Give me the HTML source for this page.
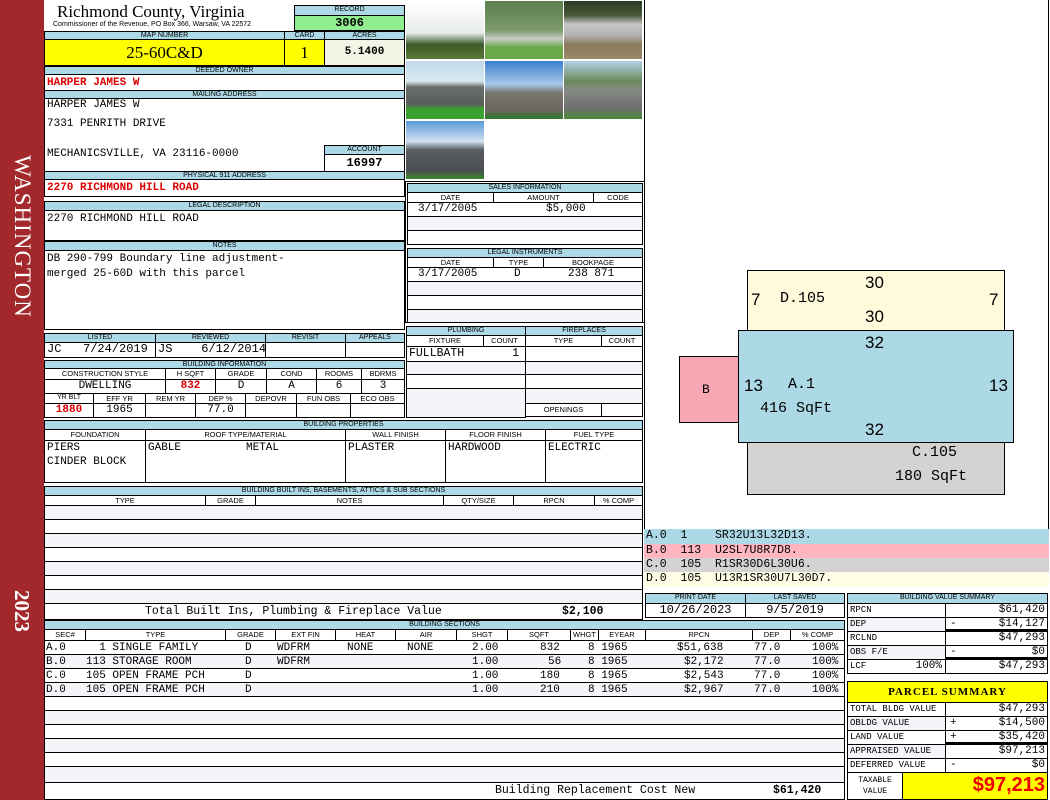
<!DOCTYPE html>
<html><head><meta charset="utf-8">
<style>
*{box-sizing:border-box;margin:0;padding:0}
body{width:1050px;height:800px;position:relative;background:#fff;overflow:hidden;font-family:"Liberation Mono",monospace;font-size:11px;color:#000}
div{position:absolute}
.h{background:#add8e6;border:1px solid #000;font:7px "Liberation Sans",sans-serif;text-align:center;line-height:8px;white-space:nowrap;overflow:hidden}
.s{background:#fff;border:1px solid #000;font:7.5px "Liberation Sans",sans-serif;text-align:center;line-height:9px;white-space:nowrap;overflow:hidden}
.c{border:1px solid #000;background:#fff;white-space:nowrap;overflow:hidden;line-height:13px;padding:0 2px}
.g{background:#f3f5f9}
.r{text-align:right}.ce{text-align:center}
.red{color:#d00;font-weight:bold}
.b{font-weight:bold}
.ph{border:1px solid #fff}
.sg{position:absolute;left:4px}
</style></head><body>
<!-- sidebar -->
<div style="left:0;top:0;width:44px;height:800px;background:#a3282b"></div>
<div style="left:8px;top:155px;width:28px;height:175px;"><div style="left:0;top:0;width:175px;height:28px;transform-origin:0 0;transform:translate(28px,0) rotate(90deg);color:#fff;font:23px 'Liberation Serif',serif;line-height:28px;letter-spacing:1px">WASHINGTON</div></div>
<div style="left:8px;top:590px;width:28px;height:45px;"><div style="left:0;top:0;width:45px;height:28px;transform-origin:0 0;transform:translate(28px,0) rotate(90deg);color:#fff;font:bold 21px 'Liberation Serif',serif;line-height:28px">2023</div></div>

<!-- title -->
<div style="left:57px;top:2px;font:17px 'Liberation Serif',serif;line-height:20px">Richmond County, Virginia</div>
<div style="left:53px;top:21px;font:7px 'Liberation Sans',sans-serif">Commissioner of the Revenue, PO Box 366, Warsaw, VA 22572</div>
<div class="h" style="left:294px;top:5px;width:111px;height:11px">RECORD</div>
<div class="c b ce" style="left:294px;top:15px;width:111px;height:16px;background:#90ee90;font-size:12px;line-height:14px">3006</div>
<div class="h" style="left:44px;top:31px;width:241px;height:9px">MAP NUMBER</div>
<div class="h" style="left:284px;top:31px;width:41px;height:9px">CARD</div>
<div class="h" style="left:324px;top:31px;width:81px;height:9px">ACRES</div>
<div class="c ce" style="left:44px;top:39px;width:241px;height:27px;background:#ffff00;font:17px 'Liberation Serif',serif;line-height:25px">25-60C&amp;D</div>
<div class="c ce" style="left:284px;top:39px;width:41px;height:27px;background:#ffff00;font:17px 'Liberation Serif',serif;line-height:25px">1</div>
<div class="c ce b" style="left:324px;top:39px;width:81px;height:27px;background:#f3f3e6;line-height:25px">5.1400</div>
<div class="h" style="left:44px;top:66px;width:361px;height:9px">DEEDED OWNER</div>
<div class="c red" style="left:44px;top:74px;width:361px;height:17px;line-height:16px">HARPER JAMES W</div>
<div class="h" style="left:44px;top:90px;width:361px;height:9px">MAILING ADDRESS</div>
<div class="c" style="left:44px;top:98px;width:361px;height:74px"></div>
<div style="left:47px;top:98px;line-height:14px">HARPER JAMES W</div>
<div style="left:47px;top:117px;line-height:14px">7331 PENRITH DRIVE</div>
<div style="left:47px;top:147px;line-height:14px">MECHANICSVILLE, VA 23116-0000</div>
<div class="h" style="left:324px;top:145px;width:81px;height:10px">ACCOUNT</div>
<div class="c b ce" style="left:324px;top:154px;width:81px;height:18px;font-size:12px;line-height:17px">16997</div>
<div class="h" style="left:44px;top:171px;width:361px;height:9px">PHYSICAL 911 ADDRESS</div>
<div class="c red" style="left:44px;top:179px;width:361px;height:18px;line-height:17px">2270 RICHMOND HILL ROAD</div>
<div class="h" style="left:44px;top:201px;width:361px;height:10px">LEGAL DESCRIPTION</div>
<div class="c" style="left:44px;top:210px;width:361px;height:31px;line-height:17px">2270 RICHMOND HILL ROAD</div>
<div class="h" style="left:44px;top:241px;width:361px;height:10px">NOTES</div>
<div class="c" style="left:44px;top:250px;width:361px;height:80px;line-height:15px;padding-top:1px">DB 290-799 Boundary line adjustment-<br>merged 25-60D with this parcel</div>

<!-- listed -->
<div class="h" style="left:44px;top:333px;width:112px;height:10px">LISTED</div>
<div class="h" style="left:155px;top:333px;width:111px;height:10px">REVIEWED</div>
<div class="h" style="left:265px;top:333px;width:81px;height:10px">REVISIT</div>
<div class="h" style="left:345px;top:333px;width:60px;height:10px">APPEALS</div>
<div class="c" style="left:44px;top:342px;width:112px;height:16px;font-size:12px">JC&nbsp;&nbsp;&nbsp;7/24/2019</div>
<div class="c" style="left:155px;top:342px;width:111px;height:16px;font-size:12px">JS&nbsp;&nbsp;&nbsp;&nbsp;6/12/2014</div>
<div class="c" style="left:265px;top:342px;width:81px;height:16px"></div>
<div class="c" style="left:345px;top:342px;width:60px;height:16px"></div>
<div class="h" style="left:44px;top:360px;width:361px;height:9px">BUILDING INFORMATION</div>
<div class="s" style="left:44px;top:368px;width:122px;height:12px">CONSTRUCTION STYLE</div>
<div class="s" style="left:165px;top:368px;width:51px;height:12px">H SQFT</div>
<div class="s" style="left:215px;top:368px;width:52px;height:12px">GRADE</div>
<div class="s" style="left:266px;top:368px;width:51px;height:12px">COND</div>
<div class="s" style="left:316px;top:368px;width:46px;height:12px">ROOMS</div>
<div class="s" style="left:361px;top:368px;width:44px;height:12px">BDRMS</div>
<div class="c ce" style="left:44px;top:379px;width:122px;height:15px">DWELLING</div>
<div class="c ce red" style="left:165px;top:379px;width:51px;height:15px">832</div>
<div class="c ce" style="left:215px;top:379px;width:52px;height:15px">D</div>
<div class="c ce" style="left:266px;top:379px;width:51px;height:15px">A</div>
<div class="c ce" style="left:316px;top:379px;width:46px;height:15px">6</div>
<div class="c ce" style="left:361px;top:379px;width:44px;height:15px">3</div>
<div class="h" style="left:44px;top:393px;width:50px;height:11px;background:#fff">YR BLT</div>
<div class="s" style="left:93px;top:393px;width:53px;height:11px">EFF YR</div>
<div class="s" style="left:145px;top:393px;width:51px;height:11px">REM YR</div>
<div class="s" style="left:195px;top:393px;width:51px;height:11px">DEP %</div>
<div class="s" style="left:245px;top:393px;width:52px;height:11px">DEPOVR</div>
<div class="s" style="left:296px;top:393px;width:55px;height:11px">FUN OBS</div>
<div class="s" style="left:350px;top:393px;width:55px;height:11px">ECO OBS</div>
<div class="c ce red" style="left:44px;top:403px;width:50px;height:15px">1880</div>
<div class="c ce" style="left:93px;top:403px;width:53px;height:15px">1965</div>
<div class="c" style="left:145px;top:403px;width:51px;height:15px"></div>
<div class="c ce" style="left:195px;top:403px;width:51px;height:15px">77.0</div>
<div class="c" style="left:245px;top:403px;width:52px;height:15px"></div>
<div class="c" style="left:296px;top:403px;width:55px;height:15px"></div>
<div class="c" style="left:350px;top:403px;width:55px;height:15px"></div>

<!-- photos -->
<div style="left:405px;top:0;width:240px;height:182px;border-right:1px solid #000"></div>
<div class="ph" style="left:405px;top:0;width:80px;height:60px;background:linear-gradient(#fff 0,#e8ece8 55%,#3a5a2a 75%,#5a7a3a)"></div>
<div class="ph" style="left:484px;top:0;width:80px;height:60px;background:linear-gradient(#5d7d4d,#7a9a6a 50%,#c8ccc8 65%,#6aa84a 80%)"></div>
<div class="ph" style="left:563px;top:0;width:80px;height:60px;background:linear-gradient(#2a3a22,#4a5a3a 25%,#c8c8c8 40%,#b0b0b0 60%,#8a7a5a 75%,#9a8a6a)"></div>
<div class="ph" style="left:405px;top:60px;width:80px;height:60px;background:linear-gradient(#c0d8ec,#d8e8f0 35%,#6a6e6a 45%,#5a5e5a 75%,#3aa030 82%)"></div>
<div class="ph" style="left:484px;top:60px;width:80px;height:60px;background:linear-gradient(#3a80d0,#a8c8e8 40%,#7a7670 55%,#6a665e 85%,#2a7a2a)"></div>
<div class="ph" style="left:563px;top:60px;width:80px;height:60px;background:linear-gradient(#b0d0e8,#6a8a5a 35%,#888a88 50%,#6e706e 80%,#4a8a3a)"></div>
<div class="ph" style="left:405px;top:120px;width:80px;height:60px;background:linear-gradient(#5a9ad8,#d0e0f0 35%,#5a5e62 50%,#4a4e52 85%,#3a8a2a)"></div>

<!-- sales -->
<div style="left:405px;top:181px;width:240px;height:142px;border:1px solid #000"></div>
<div class="h" style="left:407px;top:183px;width:236px;height:10px">SALES INFORMATION</div>
<div class="s" style="left:407px;top:192px;width:87px;height:11px">DATE</div>
<div class="s" style="left:493px;top:192px;width:101px;height:11px">AMOUNT</div>
<div class="s" style="left:593px;top:192px;width:50px;height:11px">CODE</div>
<div class="c" style="left:407px;top:202px;width:236px;height:15px;padding-left:10px">3/17/2005<span style="position:absolute;left:138px">$5,000</span></div>
<div class="c g" style="left:407px;top:216px;width:236px;height:15px"></div>
<div class="c" style="left:407px;top:230px;width:236px;height:15px"></div>
<div class="h" style="left:407px;top:248px;width:236px;height:10px">LEGAL INSTRUMENTS</div>
<div class="s" style="left:407px;top:257px;width:87px;height:11px">DATE</div>
<div class="s" style="left:493px;top:257px;width:51px;height:11px">TYPE</div>
<div class="s" style="left:543px;top:257px;width:100px;height:11px">BOOKPAGE</div>
<div class="c" style="left:407px;top:267px;width:236px;height:15px;padding-left:10px">3/17/2005<span style="position:absolute;left:106px">D</span><span style="position:absolute;left:160px">238 871</span></div>
<div class="c g" style="left:407px;top:281px;width:236px;height:15px"></div>
<div class="c" style="left:407px;top:295px;width:236px;height:15px"></div>
<div class="c g" style="left:407px;top:309px;width:236px;height:14px"></div>

<!-- plumbing -->
<div class="h" style="left:406px;top:326px;width:120px;height:10px">PLUMBING</div>
<div class="h" style="left:525px;top:326px;width:118px;height:10px">FIREPLACES</div>
<div class="s" style="left:406px;top:335px;width:78px;height:12px">FIXTURE</div>
<div class="s" style="left:483px;top:335px;width:43px;height:12px">COUNT</div>
<div class="s" style="left:525px;top:335px;width:77px;height:12px">TYPE</div>
<div class="s" style="left:601px;top:335px;width:42px;height:12px">COUNT</div>
<div class="c" style="left:406px;top:346px;width:120px;height:16px;font-size:11.5px">FULLBATH<span style="position:absolute;right:6px">1</span></div>
<div class="c g" style="left:406px;top:361px;width:120px;height:14px"></div>
<div class="c" style="left:406px;top:374px;width:120px;height:15px"></div>
<div class="c g" style="left:406px;top:388px;width:120px;height:30px"></div>
<div class="c" style="left:525px;top:346px;width:118px;height:16px"></div>
<div class="c g" style="left:525px;top:361px;width:118px;height:14px"></div>
<div class="c" style="left:525px;top:374px;width:118px;height:15px"></div>
<div class="c g" style="left:525px;top:388px;width:118px;height:16px"></div>
<div class="s" style="left:525px;top:403px;width:77px;height:14px;line-height:12px">OPENINGS</div>
<div class="c" style="left:601px;top:403px;width:42px;height:14px"></div>

<!-- building props -->
<div class="h" style="left:44px;top:420px;width:599px;height:10px">BUILDING PROPERTIES</div>
<div class="s" style="left:44px;top:429px;width:102px;height:12px">FOUNDATION</div>
<div class="s" style="left:145px;top:429px;width:201px;height:12px">ROOF TYPE/MATERIAL</div>
<div class="s" style="left:345px;top:429px;width:101px;height:12px">WALL FINISH</div>
<div class="s" style="left:445px;top:429px;width:101px;height:12px">FLOOR FINISH</div>
<div class="s" style="left:545px;top:429px;width:98px;height:12px">FUEL TYPE</div>
<div class="c" style="left:44px;top:440px;width:102px;height:43px;line-height:14px">PIERS<br>CINDER BLOCK</div>
<div class="c" style="left:145px;top:440px;width:201px;height:43px;line-height:14px">GABLE<span style="position:absolute;left:100px">METAL</span></div>
<div class="c" style="left:345px;top:440px;width:101px;height:43px;line-height:14px">PLASTER</div>
<div class="c" style="left:445px;top:440px;width:101px;height:43px;line-height:14px">HARDWOOD</div>
<div class="c" style="left:545px;top:440px;width:98px;height:43px;line-height:14px">ELECTRIC</div>

<!-- built ins -->
<div class="h" style="left:44px;top:486px;width:599px;height:10px">BUILDING BUILT INS, BASEMENTS, ATTICS &amp; SUB SECTIONS</div>
<div class="s" style="left:44px;top:495px;width:162px;height:11px">TYPE</div>
<div class="s" style="left:205px;top:495px;width:51px;height:11px">GRADE</div>
<div class="s" style="left:255px;top:495px;width:189px;height:11px">NOTES</div>
<div class="s" style="left:443px;top:495px;width:71px;height:11px">QTY/SIZE</div>
<div class="s" style="left:513px;top:495px;width:82px;height:11px">RPCN</div>
<div class="s" style="left:594px;top:495px;width:49px;height:11px">% COMP</div>
<div class="c g" style="left:44px;top:505px;width:599px;height:15px"></div>
<div class="c" style="left:44px;top:519px;width:599px;height:15px"></div>
<div class="c g" style="left:44px;top:533px;width:599px;height:15px"></div>
<div class="c" style="left:44px;top:547px;width:599px;height:15px"></div>
<div class="c g" style="left:44px;top:561px;width:599px;height:15px"></div>
<div class="c" style="left:44px;top:575px;width:599px;height:15px"></div>
<div class="c g" style="left:44px;top:589px;width:599px;height:15px"></div>
<div class="c" style="left:44px;top:603px;width:599px;height:17px;line-height:15px;font-size:11.5px"><span style="position:absolute;left:100px">Total Built Ins, Plumbing &amp; Fireplace Value</span><span class="b" style="position:absolute;left:517px">$2,100</span></div>

<!-- building sections -->
<div class="h" style="left:44px;top:620px;width:801px;height:10px">BUILDING SECTIONS</div>
<div class="s" style="left:44px;top:629px;width:42px;height:12px">SEC#</div>
<div class="s" style="left:85px;top:629px;width:141px;height:12px">TYPE</div>
<div class="s" style="left:225px;top:629px;width:51px;height:12px">GRADE</div>
<div class="s" style="left:275px;top:629px;width:61px;height:12px">EXT FIN</div>
<div class="s" style="left:335px;top:629px;width:61px;height:12px">HEAT</div>
<div class="s" style="left:395px;top:629px;width:62px;height:12px">AIR</div>
<div class="s" style="left:456px;top:629px;width:52px;height:12px">SHGT</div>
<div class="s" style="left:507px;top:629px;width:64px;height:12px">SQFT</div>
<div class="s" style="left:570px;top:629px;width:29px;height:12px">WHGT</div>
<div class="s" style="left:598px;top:629px;width:48px;height:12px">EYEAR</div>
<div class="s" style="left:645px;top:629px;width:108px;height:12px">RPCN</div>
<div class="s" style="left:752px;top:629px;width:39px;height:12px">DEP</div>
<div class="s" style="left:790px;top:629px;width:55px;height:12px">% COMP</div>
<div class="c" style="left:44px;top:640px;width:801px;height:15px"></div>
<div class="c g" style="left:44px;top:654px;width:801px;height:15px"></div>
<div class="c" style="left:44px;top:668px;width:801px;height:15px"></div>
<div class="c g" style="left:44px;top:682px;width:801px;height:15px"></div>
<div class="c" style="left:44px;top:696px;width:801px;height:15px"></div>
<div class="c g" style="left:44px;top:710px;width:801px;height:15px"></div>
<div class="c" style="left:44px;top:724px;width:801px;height:15px"></div>
<div class="c g" style="left:44px;top:738px;width:801px;height:15px"></div>
<div class="c" style="left:44px;top:752px;width:801px;height:15px"></div>
<div class="c g" style="left:44px;top:766px;width:801px;height:17px"></div>
<div class="c" style="left:44px;top:782px;width:801px;height:18px;line-height:16px;font-size:11.5px"><span style="position:absolute;left:450px">Building Replacement Cost New</span><span class="b" style="position:absolute;left:728px">$61,420</span></div>
<div style="left:46px;top:641px;width:798px;height:56px;line-height:14px;font-size:11px">
<div style="left:0;top:0">A.0</div><div style="left:0;top:14px">B.0</div><div style="left:0;top:28px">C.0</div><div style="left:0;top:42px">D.0</div>
<div style="left:40px;top:0">&nbsp;&nbsp;1 SINGLE FAMILY</div><div style="left:40px;top:14px">113 STORAGE ROOM</div><div style="left:40px;top:28px">105 OPEN FRAME PCH</div><div style="left:40px;top:42px">105 OPEN FRAME PCH</div>
<div style="left:199px;top:0">D</div><div style="left:199px;top:14px">D</div><div style="left:199px;top:28px">D</div><div style="left:199px;top:42px">D</div>
<div style="left:231px;top:0">WDFRM</div><div style="left:231px;top:14px">WDFRM</div>
<div style="left:301px;top:0">NONE</div><div style="left:361px;top:0">NONE</div>
<div style="left:426px;top:0">2.00</div><div style="left:426px;top:14px">1.00</div><div style="left:426px;top:28px">1.00</div><div style="left:426px;top:42px">1.00</div>
<div style="left:494px;top:0">832</div><div style="left:502px;top:14px">56</div><div style="left:494px;top:28px">180</div><div style="left:494px;top:42px">210</div>
<div style="left:542px;top:0">8 1965</div><div style="left:542px;top:14px">8 1965</div><div style="left:542px;top:28px">8 1965</div><div style="left:542px;top:42px">8 1965</div>
<div style="left:631px;top:0">$51,638</div><div style="left:638px;top:14px">$2,172</div><div style="left:638px;top:28px">$2,543</div><div style="left:638px;top:42px">$2,967</div>
<div style="left:708px;top:0">77.0</div><div style="left:708px;top:14px">77.0</div><div style="left:708px;top:28px">77.0</div><div style="left:708px;top:42px">77.0</div>
<div style="left:766px;top:0">100%</div><div style="left:766px;top:14px">100%</div><div style="left:766px;top:28px">100%</div><div style="left:766px;top:42px">100%</div>
</div>

<!-- sketch -->
<div style="left:644px;top:0;width:405px;height:530px;border:1px solid #000;border-top:none"></div>
<div style="left:747px;top:270px;width:258px;height:61px;background:#fffadc;border:1px solid #000"></div>
<div style="left:679px;top:356px;width:60px;height:67px;background:#f8a8b4;border:1px solid #000"></div>
<div style="left:747px;top:441px;width:258px;height:54px;background:#d3d3d3;border:1px solid #000"></div>
<div style="left:738px;top:330px;width:276px;height:113px;background:#add8e6;border:1px solid #000"></div>
<div style="left:0;top:0;font:17px 'Liberation Sans',sans-serif;line-height:20px;width:1050px;height:530px">
<div style="left:865px;top:273px">30</div><div style="left:865px;top:307px">30</div>
<div style="left:751px;top:290px">7</div><div style="left:989px;top:290px">7</div>
<div style="left:865px;top:333px">32</div><div style="left:865px;top:420px">32</div>
<div style="left:744px;top:376px">13</div><div style="left:989px;top:376px">13</div>
</div>
<div style="left:780px;top:290px;font-size:15px;line-height:18px">D.105</div>
<div style="left:788px;top:376px;font-size:15px;line-height:18px">A.1</div>
<div style="left:760px;top:400px;font-size:15px;line-height:18px">416 SqFt</div>
<div style="left:702px;top:382px;font-size:13px;line-height:16px">B</div>
<div style="left:912px;top:444px;font-size:15px;line-height:18px">C.105</div>
<div style="left:895px;top:468px;font-size:15px;line-height:18px">180 SqFt</div>

<!-- legend -->
<div style="left:644px;top:529px;width:405px;height:60px;font-size:11.5px;line-height:14.5px">
<div style="left:0;top:0;width:405px;height:15px;background:#add8e6;padding-left:2px">A.0&nbsp;&nbsp;1&nbsp;&nbsp;&nbsp;&nbsp;SR32U13L32D13.</div>
<div style="left:0;top:15px;width:405px;height:14px;background:#ffb6c1;padding-left:2px">B.0&nbsp;&nbsp;113&nbsp;&nbsp;U2SL7U8R7D8.</div>
<div style="left:0;top:29px;width:405px;height:14px;background:#d3d3d3;padding-left:2px">C.0&nbsp;&nbsp;105&nbsp;&nbsp;R1SR30D6L30U6.</div>
<div style="left:0;top:43px;width:405px;height:15px;background:#fffde6;padding-left:2px">D.0&nbsp;&nbsp;105&nbsp;&nbsp;U13R1SR30U7L30D7.</div>
</div>

<!-- print date -->
<div class="h" style="left:645px;top:593px;width:101px;height:11px">PRINT DATE</div>
<div class="h" style="left:745px;top:593px;width:100px;height:11px">LAST SAVED</div>
<div class="c ce" style="left:645px;top:603px;width:101px;height:15px;font-size:12px">10/26/2023</div>
<div class="c ce" style="left:745px;top:603px;width:100px;height:15px;font-size:12px">9/5/2019</div>

<!-- value summary -->
<div class="h" style="left:847px;top:593px;width:201px;height:11px">BUILDING VALUE SUMMARY</div>
<div style="left:847px;top:603px;width:201px;height:72px;font-size:11px">
<div class="c" style="left:0;top:0;width:99px;height:15px;font-size:9px">RPCN</div><div class="c r" style="left:98px;top:0;width:103px;height:15px">$61,420</div>
<div class="c g" style="left:0;top:14px;width:99px;height:15px;font-size:9px">DEP</div><div class="c r" style="left:98px;top:14px;width:103px;height:15px;border-bottom:3px solid #000"><span class="sg">-</span>$14,127</div>
<div class="c" style="left:0;top:28px;width:99px;height:15px;font-size:9px">RCLND</div><div class="c r" style="left:98px;top:28px;width:103px;height:15px">$47,293</div>
<div class="c g" style="left:0;top:42px;width:99px;height:15px;font-size:9px">OBS F/E</div><div class="c r" style="left:98px;top:42px;width:103px;height:15px;border-bottom:3px solid #000"><span class="sg">-</span>$0</div>
<div class="c" style="left:0;top:56px;width:99px;height:15px;font-size:9px">LCF<span style="position:absolute;right:3px;font-size:11px">100%</span></div><div class="c r" style="left:98px;top:56px;width:103px;height:15px">$47,293</div>
</div>

<!-- parcel summary -->
<div class="c ce b" style="left:847px;top:681px;width:201px;height:22px;background:#ffff00;font:bold 11px 'Liberation Serif',serif;line-height:20px;letter-spacing:1px">PARCEL SUMMARY</div>
<div style="left:847px;top:702px;width:201px;height:98px;font-size:11px">
<div class="c" style="left:0;top:0;width:99px;height:15px;font-size:9px">TOTAL BLDG VALUE</div><div class="c r" style="left:98px;top:0;width:103px;height:15px">$47,293</div>
<div class="c g" style="left:0;top:14px;width:99px;height:15px;font-size:9px">OBLDG VALUE</div><div class="c r" style="left:98px;top:14px;width:103px;height:15px"><span class="sg">+</span>$14,500</div>
<div class="c" style="left:0;top:28px;width:99px;height:15px;font-size:9px">LAND VALUE</div><div class="c r" style="left:98px;top:28px;width:103px;height:15px;border-bottom:3px solid #000"><span class="sg">+</span>$35,420</div>
<div class="c g" style="left:0;top:42px;width:99px;height:15px;font-size:9px">APPRAISED VALUE</div><div class="c r" style="left:98px;top:42px;width:103px;height:15px">$97,213</div>
<div class="c" style="left:0;top:56px;width:99px;height:15px;font-size:9px">DEFERRED VALUE</div><div class="c r" style="left:98px;top:56px;width:103px;height:15px"><span class="sg">-</span>$0</div>
<div class="c ce" style="left:0;top:70px;width:56px;height:28px;font-size:8px;line-height:11px;padding-top:2px">TAXABLE<br>VALUE</div>
<div class="c r" style="left:55px;top:70px;width:146px;height:28px;background:#ffff00;color:#e00;font:bold 20px 'Liberation Sans',sans-serif;line-height:25px">$97,213</div>
</div>
</body></html>
